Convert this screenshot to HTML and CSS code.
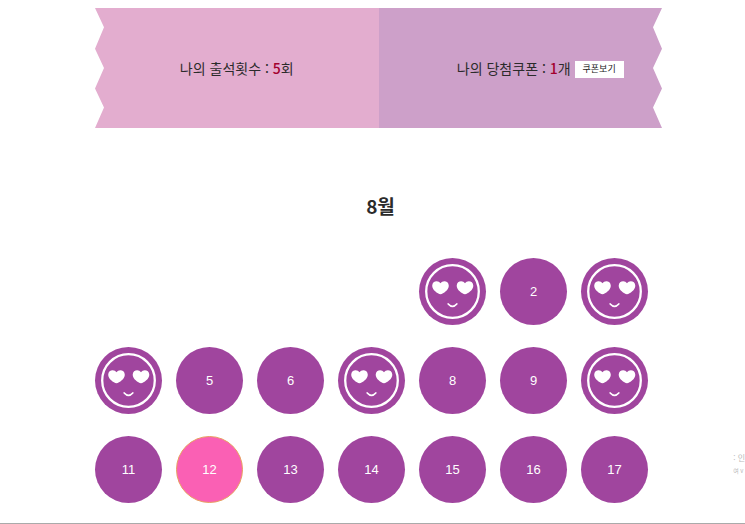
FILE: index.html
```html
<!DOCTYPE html>
<html lang="ko">
<head>
<meta charset="utf-8">
<title>출석체크</title>
<link rel="stylesheet" href="styles.css">
</head>
<body>
<svg class="defs" aria-hidden="true">
  <symbol id="face" viewBox="0 0 67 67">
    <circle cx="33.5" cy="33.5" r="26.3" fill="none" stroke="#fff" stroke-width="2.3"/>
    <path id="heart" fill="#fff" d="M21.5 36.3C18.5 35.5 13.2 32 13.2 27.700C13.2 22.600 19.500 21.900 21.500 25.200C23.500 21.900 29.800 22.600 29.800 27.700C29.800 32 24.500 35.500 21.500 36.300Z"/>
    <use href="#heart" x="24.500"/>
    <path d="M29.200 46Q33.500 50.800 37.800 46" fill="none" stroke="#fff" stroke-width="1.700" stroke-linecap="round"/>
  </symbol>
</svg>
<main class="page">
  <section class="ticket">
    <p class="half attend">나의 출석횟수 : <strong>5</strong>회</p>
    <p class="half coupon">나의 당첨쿠폰 : <strong>1</strong>개 <button class="view" type="button">쿠폰보기</button></p>
  </section>
  <h1 class="month">8월</h1>
  <ol class="days">
    <li class="day first"><svg role="img" aria-label="1"><use href="#face"/></svg></li>
    <li class="day">2</li>
    <li class="day"><svg role="img" aria-label="3"><use href="#face"/></svg></li>
    <li class="day"><svg role="img" aria-label="4"><use href="#face"/></svg></li>
    <li class="day">5</li>
    <li class="day">6</li>
    <li class="day"><svg role="img" aria-label="7"><use href="#face"/></svg></li>
    <li class="day">8</li>
    <li class="day">9</li>
    <li class="day"><svg role="img" aria-label="10"><use href="#face"/></svg></li>
    <li class="day">11</li>
    <li class="day today">12</li>
    <li class="day">13</li>
    <li class="day">14</li>
    <li class="day">15</li>
    <li class="day">16</li>
    <li class="day">17</li>
  </ol>
</main>
<aside class="notice"><span>: 인</span><small>여 v</small></aside>
</body>
</html>
```
FILE: styles.css
```css
* { box-sizing: border-box; }
body {
  margin: 0;
  padding: 8px 0 0 12px;
  background: #fff;
  color: #2b2b2b;
  font-family: "Noto Sans CJK KR", sans-serif;
  border-bottom: 1px solid #aaa;
}
.defs { position: absolute; width: 0; height: 0; }
.page {
  max-width: 567px;
  margin: 0 auto;
  padding-bottom: 20px;
}
.ticket {
  display: grid;
  grid-template-columns: 1fr 1fr;
  min-height: 120px;
  clip-path: polygon(0 0, 100% 0, calc(100% - 9px) 16%, 100% 34%, calc(100% - 9px) 50%, 100% 67%, calc(100% - 9px) 83%, 100% 100%, 0 100%, 9px 83%, 0 67%, 9px 50%, 0 34%, 9px 16%);
}
.half {
  display: flex;
  align-items: center;
  justify-content: center;
  margin: 0;
  font-size: 14px;
  line-height: 20px;
  white-space: pre;
}
.attend { background: #e3adcf; }
.coupon { background: #cda0c9; padding-left: 40px; }
.half strong { color: #a3002f; font-weight: 500; }
.view {
  height: 17px;
  margin-top: 2px;
  padding: 0 8px;
  border: 0;
  background: #fff;
  color: #222;
  font-family: inherit;
  font-size: 9px;
  line-height: 16px;
}
.month {
  margin: 64px 0 38px;
  padding-left: 4px;
  text-align: center;
  font-size: 19px;
  font-weight: 700;
  line-height: 28px;
}
.days {
  display: grid;
  grid-template-columns: repeat(7, 1fr);
  row-gap: 22px;
  margin: 0;
  padding: 0;
  list-style: none;
}
.day {
  display: flex;
  align-items: center;
  justify-content: center;
  width: 67px;
  height: 67px;
  border-radius: 50%;
  background: #a0459e;
  color: #fff;
  font-family: "Liberation Sans", sans-serif;
  font-size: 13px;
}
.day svg { width: 67px; height: 67px; }
.first { grid-column-start: 5; }
.today { background: #fa60b4; border: 1px solid #e8a060; }
.notice {
  position: absolute;
  right: 0;
  top: 451px;
  color: #bbb;
  font-size: 8px;
  line-height: 14px;
  white-space: nowrap;
}
.notice span, .notice small { display: block; }
.notice small { font-size: 6px; line-height: 12px; }
```
